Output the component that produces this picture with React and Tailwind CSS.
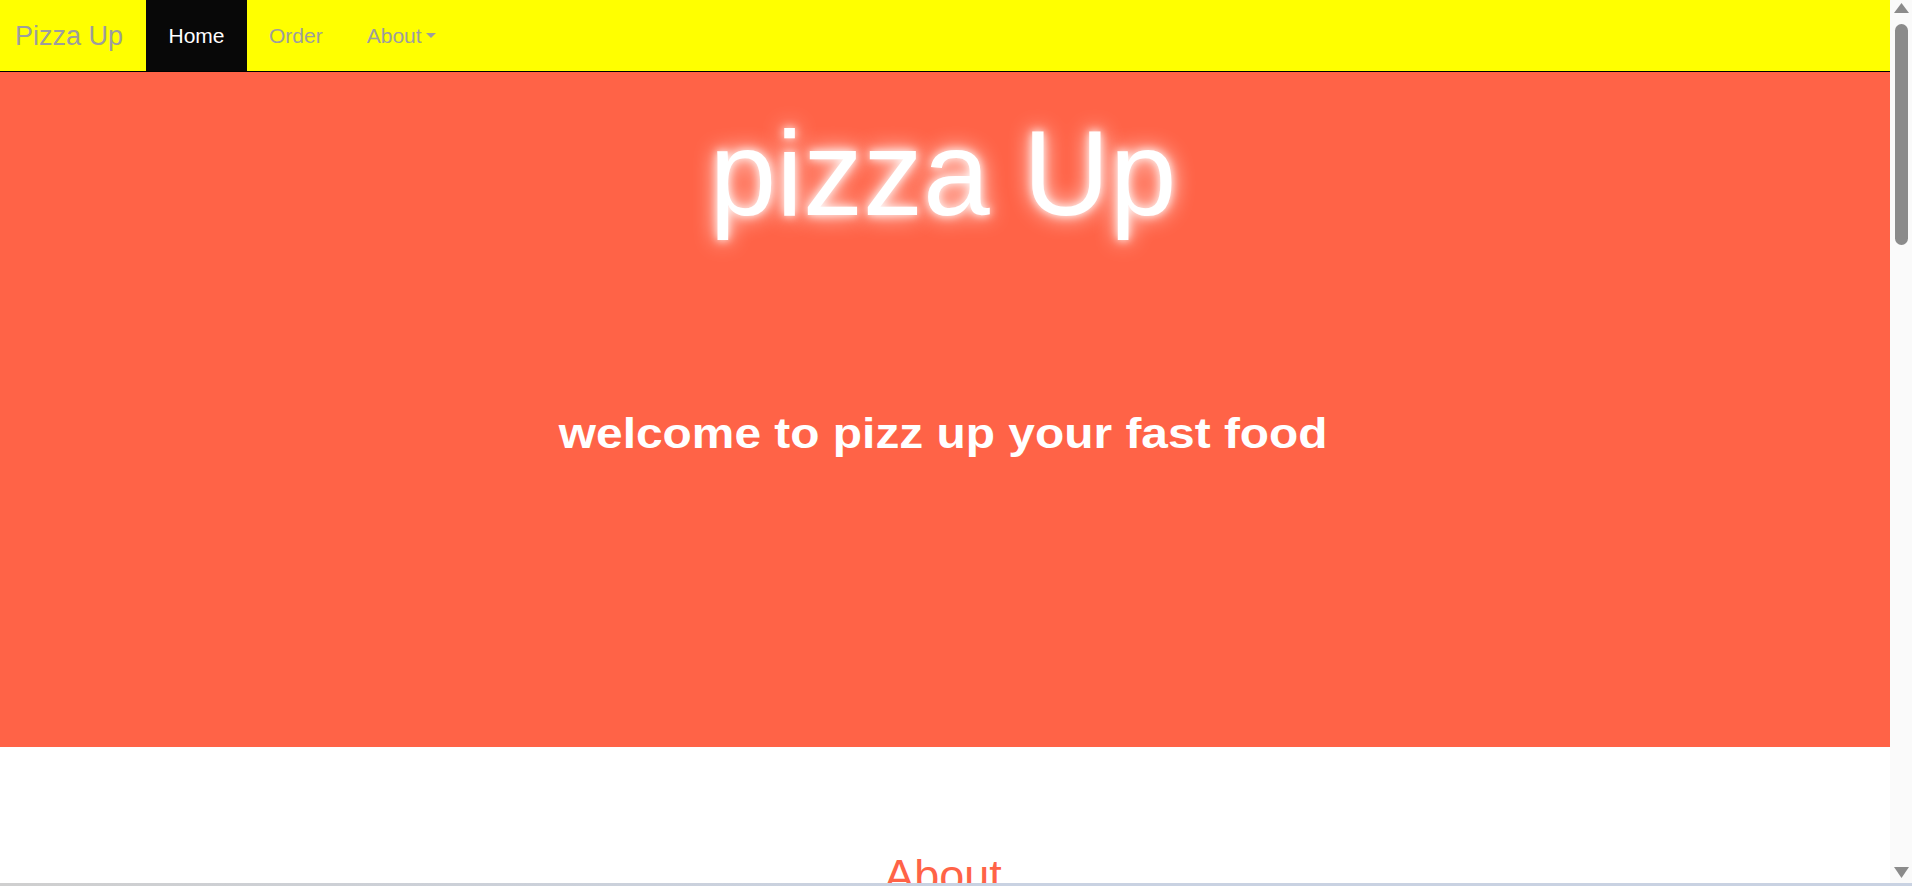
function NavBar() {
    return (
        <nav className="flex h-[72px] border-b border-black bg-[#ffff00]">
            <a className="flex w-[146px] items-center pl-[15px] text-[27px] leading-[28px] text-[#9d9d9d]">
                Pizza Up
            </a>
            <ul className="flex">
                <li className="flex items-center bg-[#080808] px-[22.5px] text-[21px] leading-[28px] text-white">
                    Home
                </li>
                <li className="flex items-center px-[22px] text-[21px] leading-[28px] text-[#9d9d9d]">
                    Order
                </li>
                <li className="flex items-center px-[22px] text-[21px] leading-[28px] text-[#9d9d9d]">
                    About
                    <span className="ml-[4px] h-0 w-0 border-x-[5.5px] border-t-[5px] border-x-transparent border-t-[#9d9d9d]" />
                </li>
            </ul>
        </nav>
    );
}

function Hero() {
    return (
        <section className="flex flex-col items-center bg-[#ff6347] pt-[41px] pb-[292px] text-white">
            <h1 className="mr-[4px] text-[120px] leading-[120px] [text-shadow:0_0_10px_#fff,0_0_22px_#fff]">
                pizza Up
            </h1>
            <h2 className="mt-[180px] mr-[4px] inline-block scale-x-[1.14] text-[42px] font-bold leading-[42px]">
                welcome to pizz up your fast food
            </h2>
        </section>
    );
}

function Scrollbar() {
    return (
        <div className="flex w-[22px] flex-col items-center bg-[#fafafa] pt-[3px] pb-[5px]">
            <svg width="15" height="10" viewBox="0 0 15 10">
                <polygon points="7.5,0 15,10 0,10" fill="#8b8b8b" />
            </svg>
            <div className="mt-[11px] h-[221px] w-[13px] rounded-full bg-[#8b8b8b]" />
            <div className="flex-1" />
            <svg width="15" height="11" viewBox="0 0 15 11">
                <polygon points="0,0 15,0 7.5,11" fill="#8b8b8b" />
            </svg>
        </div>
    );
}

export default function App() {
    return (
        <div className="flex h-[886px] w-[1912px] flex-col overflow-hidden bg-white font-['Liberation_Sans',Arial,sans-serif]">
            <div className="flex min-h-0 flex-1">
                <div className="min-w-0 flex-1 overflow-hidden">
                    <NavBar />
                    <Hero />
                    <section className="flex justify-center pt-[106px]">
                        <h2 className="mr-[4px] text-[45px] leading-[45px] text-[#ff6347]">About</h2>
                    </section>
                </div>
                <Scrollbar />
            </div>
            <div className="h-[3px] bg-gradient-to-r from-[#cfcfcf] via-[#c9d2e2] to-[#c9d2e2]" />
        </div>
    );
}
